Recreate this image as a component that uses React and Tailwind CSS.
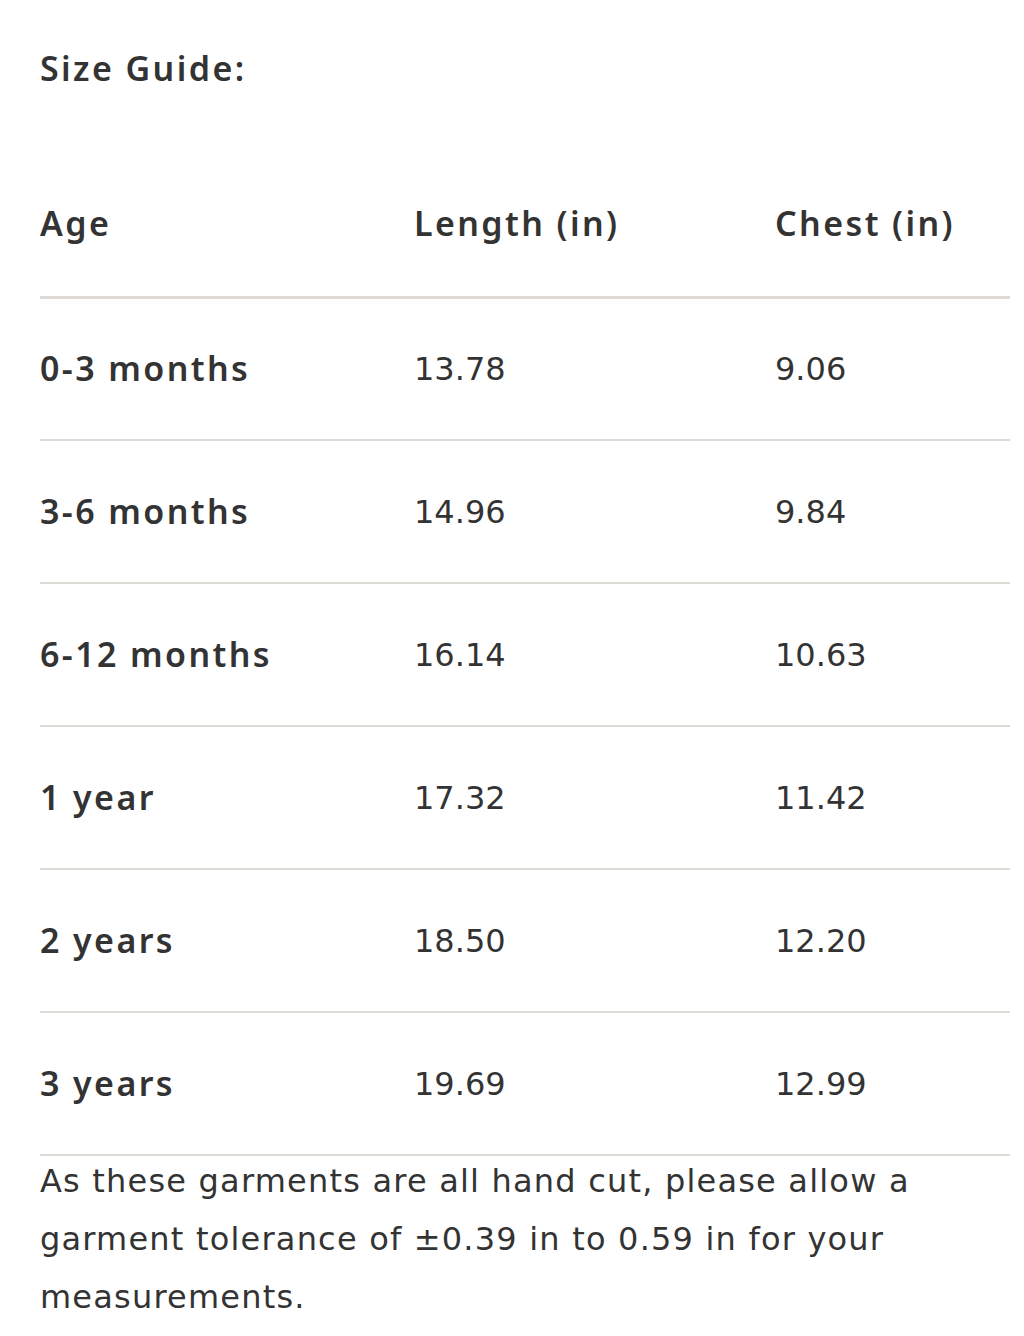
import React from 'react';

const rows = [
  ['0-3 months', '13.78', '9.06'],
  ['3-6 months', '14.96', '9.84'],
  ['6-12 months', '16.14', '10.63'],
  ['1 year', '17.32', '11.42'],
  ['2 years', '18.50', '12.20'],
  ['3 years', '19.69', '12.99'],
];

const bold = "font-['Noto_Sans',sans-serif] text-[34px] font-semibold tracking-[2.4px]";
const num = "font-['DejaVu_Sans',sans-serif] text-[32px] tracking-[0px]";
const reg = "font-['DejaVu_Sans',sans-serif] text-[32px] tracking-[1.2px]";

export default function App() {
  return (
    <div className="min-h-[1336px] bg-white pl-10 pr-[14px] pt-[44px] text-[#333]">
      <h2 className={`${bold} leading-[48px]`}>Size Guide:</h2>
      <table className="w-full mt-[62px] border-collapse table-fixed">
        <thead>
          <tr className="border-b-[3px] border-[#dedbd7]">
            <th className={`w-[374px] h-[143px] text-left pb-[2px] ${bold}`}>Age</th>
            <th className={`w-[361px] text-left pb-[2px] ${bold}`}>Length (in)</th>
            <th className={`text-left pb-[2px] ${bold}`}>Chest (in)</th>
          </tr>
        </thead>
        <tbody>
          {rows.map((r) => (
            <tr key={r[0]} className="border-b-2 border-[#dedbd7] h-[143px]">
              <td className={bold}>{r[0]}</td>
              <td className={num}>{r[1]}</td>
              <td className={num}>{r[2]}</td>
            </tr>
          ))}
        </tbody>
      </table>
      <p className={`${reg} leading-[58px] -mt-1 max-w-[950px]`}>
        As these garments are all hand cut, please allow a garment tolerance of ±0.39 in to 0.59 in for your measurements.
      </p>
    </div>
  );
}
